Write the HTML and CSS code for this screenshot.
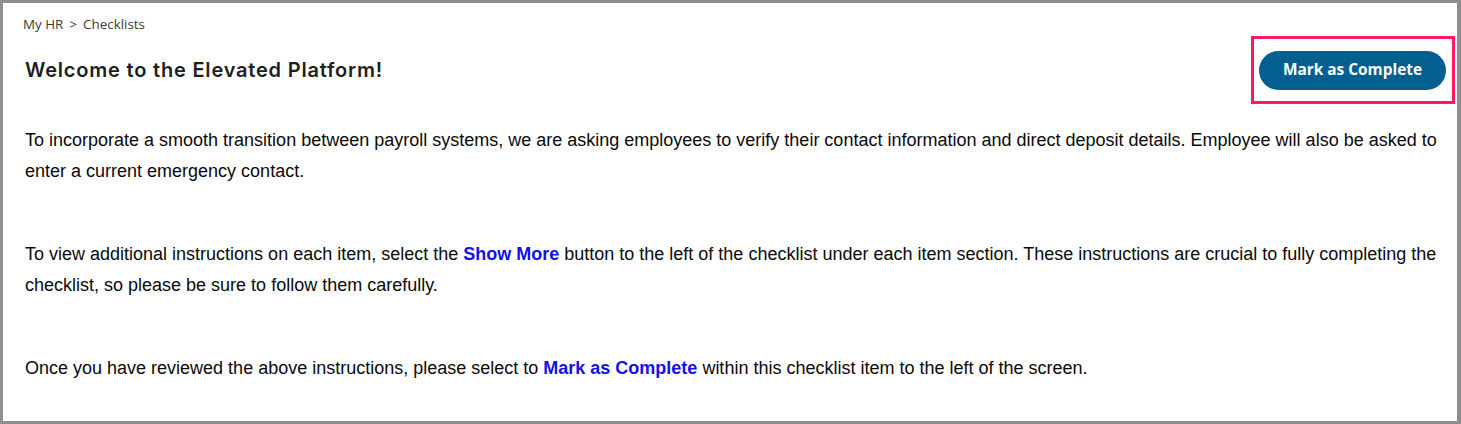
FILE: index.html
```html
<!DOCTYPE html>
<html lang="en">
<head>
<meta charset="utf-8">
<title>Checklists</title>
<link rel="stylesheet" href="styles.css">
</head>
<body>
<div class="frame">
  <nav class="crumbs"><span>My HR</span><span class="sep">&gt;</span><span>Checklists</span></nav>
  <div class="head">
    <h1 class="title">Welcome to the Elevated Platform!</h1>
    <div class="highlight">
      <button class="btn" type="button">Mark as Complete</button>
    </div>
  </div>
  <div class="content">
    <p>To incorporate a smooth transition between payroll systems, we are asking employees to verify their contact information and direct deposit details. Employee will also be asked to enter a current emergency contact.</p>
    <p>To view additional instructions on each item, select the <strong class="hl">Show More</strong> button to the left of the checklist under each item section. These instructions are crucial to fully completing the checklist, so please be sure to follow them carefully.</p>
    <p>Once you have reviewed the above instructions, please select to <strong class="hl">Mark as Complete</strong> within this checklist item to the left of the screen.</p>
  </div>
</div>
</body>
</html>
```

FILE: styles.css
```css
html, body {
  margin: 0;
  padding: 0;
  background: #ffffff;
}

.frame {
  box-sizing: border-box;
  width: 1461px;
  height: 424px;
  border-style: solid;
  border-color: #8e8e8e;
  border-width: 3px 4px 3px 3px;
  padding: 12px 2px 0 20px;
  overflow: hidden;
}

.crumbs {
  font-family: "Open Sans", "Noto Sans", sans-serif;
  font-size: 13.4px;
  line-height: 18px;
  color: #3a3a3a;
  display: flex;
  gap: 6px;
}

.head {
  display: flex;
  align-items: center;
  justify-content: space-between;
  margin-top: 3px;
}

.title {
  margin: 0 0 0 2px;
  font-family: Inter, "Noto Sans", sans-serif;
  font-weight: 600;
  font-size: 20px;
  letter-spacing: 0.8px;
  color: #1e1e1e;
}

.highlight {
  border: 3px solid #ff1a5e;
  padding: 12px 6px 11px 5px;
  display: flex;
}

.btn {
  width: 187px;
  height: 39px;
  border: none;
  border-radius: 20px;
  background: #035f8f;
  color: #ffffff;
  font-family: "Open Sans", "Noto Sans", sans-serif;
  font-weight: 700;
  font-size: 15.4px;
  padding: 0 0 2px 0;
}

.content {
  display: flex;
  flex-direction: column;
  gap: 52px;
  margin-top: 21px;
  padding-left: 2px;
  padding-right: 16px;
}

.content p {
  margin: 0;
  font-family: "Liberation Sans", Arial, sans-serif;
  font-size: 18px;
  line-height: 31px;
  color: #0a0a0a;
}

.hl {
  color: #1010f0;
  font-weight: 700;
}
```
